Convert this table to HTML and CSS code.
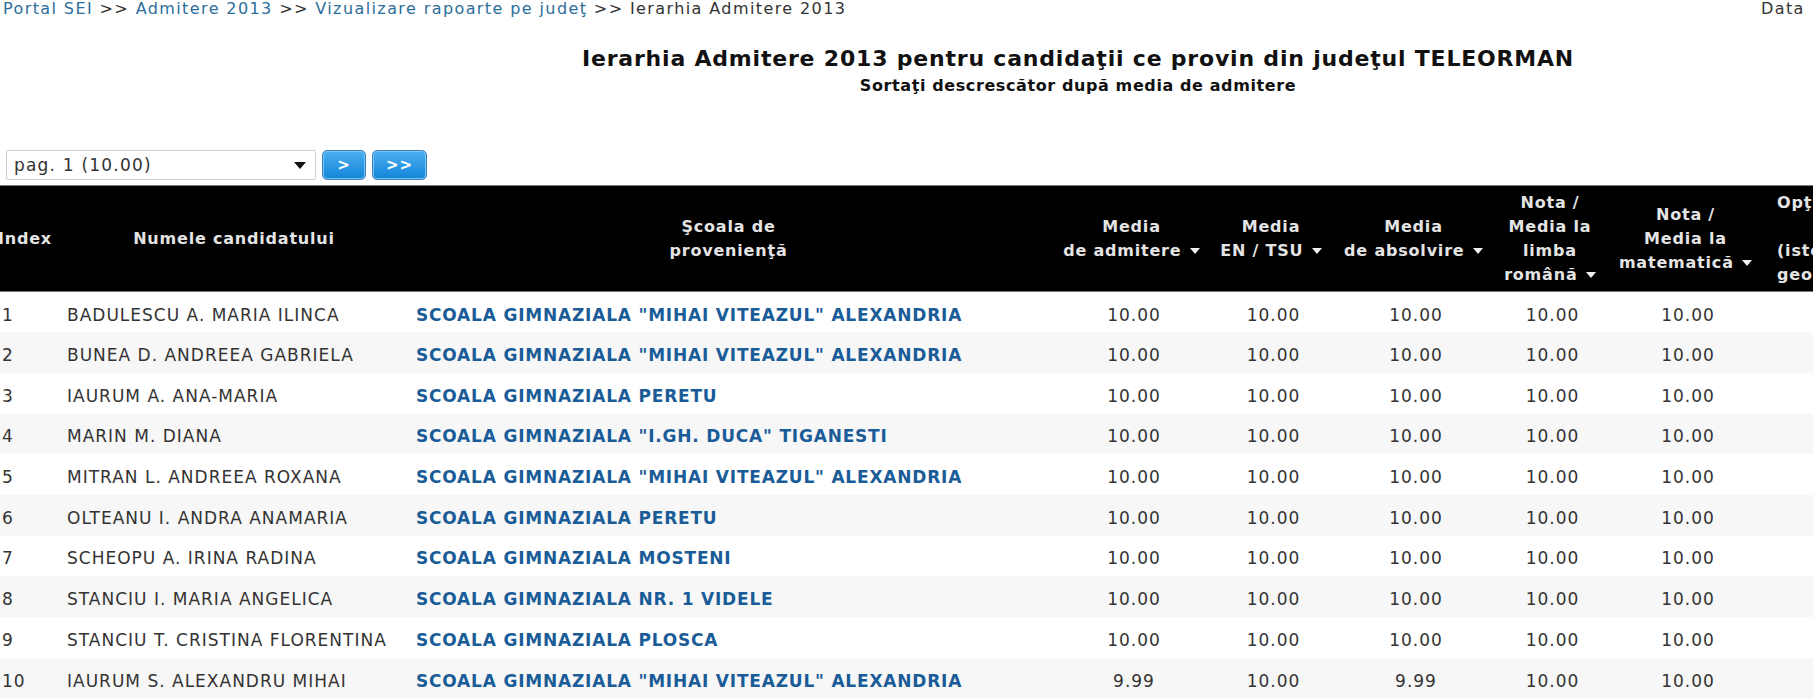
FILE: index.html
```html
<!DOCTYPE html>
<html lang="ro">
<head>
<meta charset="utf-8">
<title>Ierarhia Admitere 2013</title>
<link rel="stylesheet" href="styles.css">
</head>
<body>
<div class="page">
  <div class="topbar">
    <div class="crumbs">
      <a class="crumb-link" href="#">Portal SEI</a> &gt;&gt;
      <a class="crumb-link" href="#">Admitere 2013</a> &gt;&gt;
      <a class="crumb-link" href="#">Vizualizare rapoarte pe judeţ</a> &gt;&gt;
      <span>Ierarhia Admitere 2013</span>
    </div>
    <div class="date">
      <span>Data</span>
      <span>12.07.2013</span>
    </div>
  </div>

  <div class="titles">
    <h1 class="title">Ierarhia Admitere 2013 pentru candidaţii ce provin din judeţul TELEORMAN</h1>
    <div class="subtitle">Sortaţi descrescător după media de admitere</div>
  </div>

  <div class="pager">
    <div class="select">
      <span>pag. 1 (10.00)</span>
      <span class="select-arrow"></span>
    </div>
    <button class="btn btn-next">&gt;</button>
    <button class="btn btn-last">&gt;&gt;</button>
  </div>

  <table class="grid">
    <colgroup>
      <col class="c-idx"><col class="c-name"><col class="c-school"><col class="c-adm"><col class="c-en"><col class="c-abs"><col class="c-rom"><col class="c-mat"><col class="c-opt">
    </colgroup>
    <thead>
      <tr>
        <th class="th-idx">Index</th>
        <th>Numele candidatului</th>
        <th>Şcoala de<br>provenienţă</th>
        <th>Media<br>de admitere <span class="sort"></span></th>
        <th>Media<br>EN / TSU <span class="sort"></span></th>
        <th>Media<br>de absolvire <span class="sort"></span></th>
        <th>Nota /<br>Media la<br>limba<br>română <span class="sort"></span></th>
        <th>Nota /<br>Media la<br>matematică <span class="sort"></span></th>
        <th class="th-opt">Opţiunea<br>&nbsp;<br>(istorie<br>geografie)</th>
      </tr>
    </thead>
    <tbody>
      <tr><td class="idx">1</td><td class="name">BADULESCU A. MARIA ILINCA</td><td class="school"><a href="#">SCOALA GIMNAZIALA "MIHAI VITEAZUL" ALEXANDRIA</a></td><td class="num">10.00</td><td class="num">10.00</td><td class="num">10.00</td><td class="num">10.00</td><td class="num">10.00</td><td></td></tr>
      <tr><td class="idx">2</td><td class="name">BUNEA D. ANDREEA GABRIELA</td><td class="school"><a href="#">SCOALA GIMNAZIALA "MIHAI VITEAZUL" ALEXANDRIA</a></td><td class="num">10.00</td><td class="num">10.00</td><td class="num">10.00</td><td class="num">10.00</td><td class="num">10.00</td><td></td></tr>
      <tr><td class="idx">3</td><td class="name">IAURUM A. ANA-MARIA</td><td class="school"><a href="#">SCOALA GIMNAZIALA PERETU</a></td><td class="num">10.00</td><td class="num">10.00</td><td class="num">10.00</td><td class="num">10.00</td><td class="num">10.00</td><td></td></tr>
      <tr><td class="idx">4</td><td class="name">MARIN M. DIANA</td><td class="school"><a href="#">SCOALA GIMNAZIALA "I.GH. DUCA" TIGANESTI</a></td><td class="num">10.00</td><td class="num">10.00</td><td class="num">10.00</td><td class="num">10.00</td><td class="num">10.00</td><td></td></tr>
      <tr><td class="idx">5</td><td class="name">MITRAN L. ANDREEA ROXANA</td><td class="school"><a href="#">SCOALA GIMNAZIALA "MIHAI VITEAZUL" ALEXANDRIA</a></td><td class="num">10.00</td><td class="num">10.00</td><td class="num">10.00</td><td class="num">10.00</td><td class="num">10.00</td><td></td></tr>
      <tr><td class="idx">6</td><td class="name">OLTEANU I. ANDRA ANAMARIA</td><td class="school"><a href="#">SCOALA GIMNAZIALA PERETU</a></td><td class="num">10.00</td><td class="num">10.00</td><td class="num">10.00</td><td class="num">10.00</td><td class="num">10.00</td><td></td></tr>
      <tr><td class="idx">7</td><td class="name">SCHEOPU A. IRINA RADINA</td><td class="school"><a href="#">SCOALA GIMNAZIALA MOSTENI</a></td><td class="num">10.00</td><td class="num">10.00</td><td class="num">10.00</td><td class="num">10.00</td><td class="num">10.00</td><td></td></tr>
      <tr><td class="idx">8</td><td class="name">STANCIU I. MARIA ANGELICA</td><td class="school"><a href="#">SCOALA GIMNAZIALA NR. 1 VIDELE</a></td><td class="num">10.00</td><td class="num">10.00</td><td class="num">10.00</td><td class="num">10.00</td><td class="num">10.00</td><td></td></tr>
      <tr><td class="idx">9</td><td class="name">STANCIU T. CRISTINA FLORENTINA</td><td class="school"><a href="#">SCOALA GIMNAZIALA PLOSCA</a></td><td class="num">10.00</td><td class="num">10.00</td><td class="num">10.00</td><td class="num">10.00</td><td class="num">10.00</td><td></td></tr>
      <tr><td class="idx">10</td><td class="name">IAURUM S. ALEXANDRU MIHAI</td><td class="school"><a href="#">SCOALA GIMNAZIALA "MIHAI VITEAZUL" ALEXANDRIA</a></td><td class="num">9.99</td><td class="num">10.00</td><td class="num">9.99</td><td class="num">10.00</td><td class="num">10.00</td><td></td></tr>
    </tbody>
  </table>
</div>
</body>
</html>
```

FILE: styles.css
```css
html, body {
  margin: 0;
  padding: 0;
  overflow: hidden;
  background: #fff;
}

body {
  font-family: "DejaVu Sans", Verdana, sans-serif;
  color: #333;
}

.page {
  width: 2156px;
}

.topbar {
  display: flex;
  font-size: 16px;
  letter-spacing: 1.4px;
  line-height: 18px;
}

.crumbs {
  flex: 0 0 1761px;
  padding-left: 3px;
  box-sizing: border-box;
  color: #333;
  white-space: nowrap;
}

.crumb-link {
  color: #2c6e9b;
  text-decoration: none;
}

.date {
  display: flex;
  gap: 80px;
  color: #333;
  white-space: nowrap;
}

.titles {
  text-align: center;
  margin-top: 28px;
}

.title {
  margin: 0;
  font-size: 22px;
  letter-spacing: 0.8px;
  line-height: 26px;
  font-weight: bold;
  color: #111;
}

.subtitle {
  font-size: 16px;
  letter-spacing: 0.6px;
  line-height: 20px;
  font-weight: bold;
  color: #111;
  margin-top: 4px;
}

.pager {
  display: flex;
  align-items: center;
  gap: 6px;
  margin-top: 54px;
  margin-left: 6px;
  height: 30px;
}

.select {
  width: 310px;
  height: 30px;
  box-sizing: border-box;
  border: 1px solid #cfcfcf;
  border-radius: 2px;
  background: #fff;
  display: flex;
  align-items: center;
  justify-content: space-between;
  padding: 0 9px 0 7px;
  font-size: 17px;
  letter-spacing: 1.2px;
  color: #333;
}

.select-arrow {
  width: 0;
  height: 0;
  border-left: 6px solid transparent;
  border-right: 6px solid transparent;
  border-top: 7px solid #111;
}

.btn {
  height: 30px;
  box-sizing: border-box;
  border: 1px solid #3a7fc0;
  border-radius: 5px;
  background: linear-gradient(#4cb0f0, #1284d8);
  box-shadow: inset 0 0 0 1px #7cc6f5;
  color: #fff;
  font-family: "DejaVu Sans", Verdana, sans-serif;
  font-weight: bold;
  font-size: 15px;
  letter-spacing: 1px;
  padding: 0;
}

.btn-next { width: 44px; }
.btn-last { width: 55px; }

.grid {
  margin-left: -6px;
  margin-top: 5px;
  border-collapse: collapse;
  table-layout: fixed;
  width: 1906px;
}

.c-idx { width: 70px; }
.c-name { width: 340px; }
.c-school { width: 649px; }
.c-adm { width: 157px; }
.c-en { width: 122px; }
.c-abs { width: 163px; }
.c-rom { width: 110px; }
.c-mat { width: 161px; }
.c-opt { width: 134px; }

.grid thead tr {
  background: #000;
  border-top: 1px solid #777;
  border-bottom: 1px solid #777;
}

.grid th {
  height: 105px;
  padding: 0 2px;
  color: #e4e4e4;
  font-size: 16px;
  letter-spacing: 0.8px;
  line-height: 24px;
  font-weight: bold;
  text-align: center;
  vertical-align: middle;
  white-space: nowrap;
}

.grid th.th-idx {
  padding-right: 10px;
}

.grid th.th-opt {
  text-align: left;
  padding-left: 11px;
}

.sort {
  display: inline-block;
  width: 0;
  height: 0;
  border-left: 5px solid transparent;
  border-right: 5px solid transparent;
  border-top: 6px solid #f0f0f0;
  vertical-align: middle;
  margin-left: 2px;
}

.grid tbody tr {
  height: 40.7px;
}

.grid td {
  padding: 5px 0 0;
  font-size: 17px;
  letter-spacing: 1px;
  color: #333;
  white-space: nowrap;
  vertical-align: middle;
}

.grid tbody tr:nth-child(even) {
  background: #f7f7f7;
}

.grid td.idx {
  padding-left: 8px;
}

.grid td.name {
  padding-left: 3px;
}

.grid td.school {
  padding-left: 12px;
}

.grid td.school a {
  color: #1a5c97;
  font-weight: bold;
  letter-spacing: 0.8px;
  text-decoration: none;
}

.grid td.num {
  text-align: center;
  padding-left: 5px;
}
```
